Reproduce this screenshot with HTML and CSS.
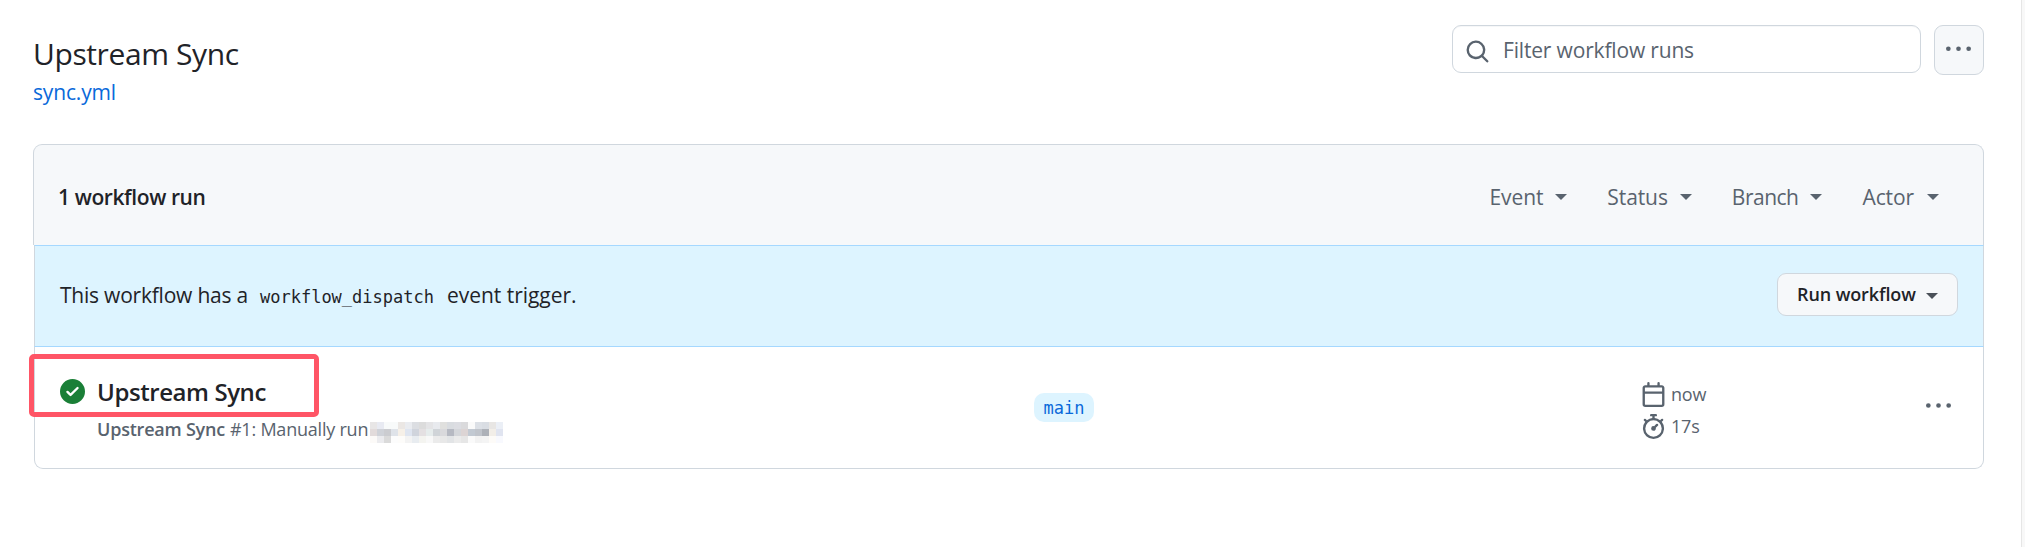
FILE: index.html
```html
<!DOCTYPE html>
<html lang="en">
<head>
<meta charset="utf-8">
<title>Upstream Sync · Workflow runs</title>
<link rel="stylesheet" href="styles.css">
</head>
<body>
<div class="page">
  <main class="content">
    <header class="page-head">
      <div class="heading">
        <h1 class="title">Upstream Sync</h1>
        <a class="file-link">sync.yml</a>
      </div>
      <div class="tools">
        <div class="search">
          <svg class="icon" viewBox="0 0 16 16"><path d="M10.68 11.74a6 6 0 0 1-7.922-8.982 6 6 0 0 1 8.982 7.922l3.04 3.04a.749.749 0 0 1-.326 1.275.749.749 0 0 1-.734-.215ZM11.5 7a4.499 4.499 0 1 0-8.997 0A4.499 4.499 0 0 0 11.5 7Z"/></svg>
          <span>Filter workflow runs</span>
        </div>
        <div class="more-button">
          <svg class="icon" viewBox="0 0 16 16"><path d="M8 9a1.5 1.5 0 1 0 0-3 1.5 1.5 0 0 0 0 3ZM1.5 9a1.5 1.5 0 1 0 0-3 1.5 1.5 0 0 0 0 3Zm13 0a1.5 1.5 0 1 0 0-3 1.5 1.5 0 0 0 0 3Z"/></svg>
        </div>
      </div>
    </header>

    <section class="runs">
      <div class="runs-head">
        <strong class="count">1 workflow run</strong>
        <div class="filters">
          <div class="filter">Event<i class="caret"></i></div>
          <div class="filter">Status<i class="caret"></i></div>
          <div class="filter branch">Branch<i class="caret"></i></div>
          <div class="filter actor">Actor<i class="caret"></i></div>
        </div>
      </div>
      <div class="dispatch">
        <p class="dispatch-text"><span class="lead">This workflow has a</span><code class="code">workflow_dispatch</code><span class="tail">event trigger.</span></p>
        <div class="run-button">Run workflow<i class="caret"></i></div>
      </div>
      <div class="run">
        <svg class="icon success" viewBox="0 0 16 16"><path d="M8 16A8 8 0 1 1 8 0a8 8 0 0 1 0 16Zm3.78-9.72a.751.751 0 0 0-.018-1.042.751.751 0 0 0-1.042-.018L6.75 9.19 5.28 7.72a.751.751 0 0 0-1.042.018.751.751 0 0 0-.018 1.042l2 2a.75.75 0 0 0 1.06 0Z"/></svg>
        <div class="run-info">
          <div class="run-title">Upstream Sync</div>
          <div class="run-sub"><b>Upstream Sync</b><span>#1: Manually run</span><svg class="mosaic" width="133" height="21" viewBox="0 0 19 3" shape-rendering="crispEdges"></svg></div>
        </div>
        <div class="run-branch"><span class="pill">main</span></div>
        <div class="run-meta">
          <div class="meta"><svg class="icon" viewBox="0 0 16 16"><path d="M4.75 0a.75.75 0 0 1 .75.75V2h5V.75a.75.75 0 0 1 1.5 0V2h1.25c.966 0 1.75.784 1.75 1.75v10.5A1.75 1.75 0 0 1 13.25 16H2.75A1.75 1.75 0 0 1 1 14.25V3.75C1 2.784 1.784 2 2.75 2H4V.75A.75.75 0 0 1 4.75 0ZM2.5 7.5v6.75c0 .138.112.25.25.25h10.5a.25.25 0 0 0 .25-.25V7.5Zm10.75-4H2.75a.25.25 0 0 0-.25.25V6h11V3.75a.25.25 0 0 0-.25-.25Z"/></svg>now</div>
          <div class="meta"><svg class="icon" viewBox="0 0 16 16"><path d="M5.75.75A.75.75 0 0 1 6.5 0h3a.75.75 0 0 1 0 1.5h-.75v1l-.001.041a6.724 6.724 0 0 1 3.464 1.435l.007-.006.75-.75a.749.749 0 0 1 1.275.326.749.749 0 0 1-.215.734l-.75.75-.006.007a6.75 6.75 0 1 1-10.548 0L2.72 5.03l-.75-.75a.751.751 0 0 1 .018-1.042.751.751 0 0 1 1.042-.018l.75.75.007.006A6.72 6.72 0 0 1 7.25 2.541V1.5H6.5a.75.75 0 0 1-.75-.75ZM8 14.5a5.25 5.25 0 1 0-.001-10.501A5.25 5.25 0 0 0 8 14.5Zm.389-6.7 1.33-1.33a.75.75 0 1 1 1.061 1.06L9.45 8.861A1.503 1.503 0 0 1 8 10.75a1.499 1.499 0 1 1 .389-2.95Z"/></svg>17s</div>
        </div>
        <svg class="icon run-more" viewBox="0 0 16 16"><path d="M8 9.5a1.5 1.5 0 1 0 0-3 1.5 1.5 0 0 0 0 3ZM1.5 9.5a1.5 1.5 0 1 0 0-3 1.5 1.5 0 0 0 0 3Zm13 0a1.5 1.5 0 1 0 0-3 1.5 1.5 0 0 0 0 3Z"/></svg>
        <div class="highlight"></div>
      </div>
    </section>
  </main>
  <div class="edge"></div>
</div>
<script src="mosaic.js"></script>
</body>
</html>
```
FILE: styles.css
```css
* { box-sizing: border-box; }

body {
  margin: 0;
  background: #fff;
  color: #1f2328;
  font: 21px "Open Sans", "Noto Sans", sans-serif;
  letter-spacing: -0.17px;
  overflow: hidden;
}

.page { display: flex; height: 547px; }
.content { flex: 1; padding: 25px 37px 0 33px; }
.edge { width: 4px; background: #f8f8f8; border-left: 1px solid #e6e6e6; }

.icon { width: 25px; height: 25px; fill: #59636e; flex: none; display: block; }

.caret {
  width: 0;
  height: 0;
  border: 6px solid transparent;
  border-top-color: currentColor;
  border-bottom: 0;
}

/* page heading */
.page-head { display: flex; justify-content: space-between; height: 119px; }
.heading { padding-top: 9px; }
.title {
  margin: 0;
  font-size: 30px;
  line-height: 40px;
  font-weight: 400;
  letter-spacing: -0.4px;
}
.file-link { display: block; color: #0969da; line-height: 37px; }
.tools { display: flex; gap: 13px; align-items: flex-start; }
.search {
  display: flex;
  align-items: center;
  gap: 13px;
  width: 469px;
  height: 48px;
  padding-left: 12px;
  border: 1px solid #d0d7de;
  border-radius: 9px;
  color: #59636e;
  box-shadow: inset 0 1px 0 rgba(208, 215, 222, .2);
}
.search .icon { margin-top: 4px; }
.search span { padding-top: 2px; }
.more-button {
  display: grid;
  place-items: center;
  width: 50px;
  height: 50px;
  border: 1px solid #d0d7de;
  border-radius: 9px;
  background: #f6f8fa;
}
.more-button .icon { margin: 0 1px 1px 0; }

/* runs box */
.runs-head {
  display: flex;
  align-items: center;
  justify-content: space-between;
  height: 101px;
  padding: 3px 44px 0 24px;
  border: 1px solid #d0d7de;
  border-bottom: 0;
  border-radius: 9px 9px 0 0;
  background: #f6f8fa;
}
.count { font-weight: 600; letter-spacing: -0.4px; }
.filters { display: flex; gap: 40px; color: #59636e; letter-spacing: -0.1px; padding-top: 1px; }
.filter { display: flex; align-items: center; gap: 12px; }
.filter.branch { letter-spacing: -0.5px; }
.filter.actor { gap: 13px; }

.dispatch {
  display: flex;
  align-items: center;
  justify-content: space-between;
  height: 102px;
  margin-left: 1px;
  padding: 0 25px;
  border: 1px solid #d0d7de;
  border-top-color: #a5d8ff;
  border-bottom-color: #a5d8ff;
  background: #ddf4ff;
}
.dispatch-text { display: flex; align-items: baseline; margin: -3px 0 0; }
.lead { letter-spacing: -0.22px; }
.tail { letter-spacing: -0.03px; }
.code {
  margin: 0 13px 0 12px;
  font: 17px "DejaVu Sans Mono", monospace;
  letter-spacing: 0;
}
.run-button {
  display: flex;
  align-items: center;
  gap: 10px;
  width: 181px;
  height: 43px;
  margin-top: -4px;
  padding-left: 19px;
  border: 1px solid #d0d7de;
  border-radius: 9px;
  background: #f6f8fa;
  font-size: 18px;
  font-weight: 600;
  letter-spacing: -0.1px;
}
.run-button .caret { color: #4a5058; margin-top: 4px; }

.run {
  position: relative;
  display: flex;
  height: 122px;
  margin-left: 1px;
  padding: 25px 32px 0 25px;
  border: 1px solid #d0d7de;
  border-top: 0;
  border-radius: 0 0 9px 9px;
}
.run .success { fill: #1a7f37; margin-top: 7px; }
.run-info { width: 949px; padding-left: 12px; }
.run-title { font-size: 24px; font-weight: 600; line-height: 39px; letter-spacing: -0.42px; }
.run-sub {
  display: flex;
  align-items: center;
  gap: 5px;
  height: 36px;
  font-size: 18px;
  color: #59636e;
  letter-spacing: -0.22px;
}
.run-sub b { font-weight: 600; }
.mosaic { margin-left: -3px; margin-top: 7px; }
.run-branch { width: 607px; padding-top: 21px; }
.pill {
  display: grid;
  place-items: center;
  width: 60px;
  height: 29px;
  border-radius: 10px;
  background: #ddf4ff;
  color: #0969da;
  font: 17px "DejaVu Sans Mono", monospace;
  letter-spacing: 0;
}
.run-meta { flex: 1; padding-top: 6px; font-size: 18px; color: #59636e; }
.meta { display: flex; align-items: center; gap: 5px; height: 32px; }
.run-more { margin-top: 21px; }

/* callout frame over the run title */
.highlight {
  position: absolute;
  left: -6px;
  top: 7px;
  width: 290px;
  height: 63px;
  border: 5px solid #ff5566;
  border-radius: 5px;
}
```
FILE: mosaic.js
```
// Colours of the pixelated user name, row by row.
const rows = [
  "e8e6e6 e8eaf2 f8fafa f8fafa ebe7e4 eaecf0 dcdee2 dcdcdc e4e4e6 e8eaee e0e0de d9dce0 dcdde2 dadadc fafafa dce0e6 d9dde3 e8e6e4 ebeff6",
  "e2dbdb cfd2d8 cbccd0 dfe3e9 f6f0e8 dfe5f0 d0d4dc e4e0e2 e6ecec d0d4d8 d9d9dc b6b9c2 d4d6da dcd4d4 c2c9d2 c0c4cb adb1b8 f2eee8 e0e4f0",
  "fcfaf8 ebebee dadada fcfcfc fdfcfa f3f3f3 e8ecf0 f4f4f0 f8f8f8 ebebeb e8e8e8 e2e4e6 ebebeb e6e6e6 fafafa f2f2f2 f4f4f4 fdfbf8 f8f9fe"
];
document.querySelector(".mosaic").innerHTML = rows.map((row, y) =>
  row.split(" ").map((c, x) => `<rect x="${x}" y="${y}" width="1" height="1" fill="#${c}"/>`).join("")
).join("");
```
